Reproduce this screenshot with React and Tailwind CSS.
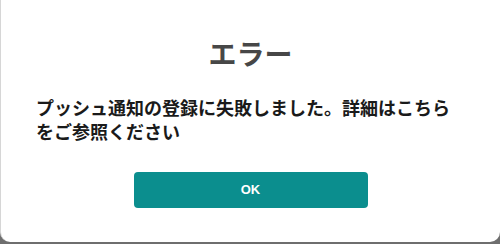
export default function App() {
  return (
    <div className="w-[500px] h-[244px] bg-[#6e6e6e] overflow-hidden">
      <div className="h-[242px] bg-white border-l border-[#d6d6d6] rounded-b-[10px] flex flex-col items-center font-['Noto_Sans_CJK_JP',sans-serif]">
        <h1 className="mt-[36px] text-[28px] leading-[34px] font-bold text-[#474747]">エラー</h1>
        <p className="mt-[25px] w-full pl-[35px] pr-[34px] text-[18px] leading-[24px] font-bold text-[#1a1a1a]">
          プッシュ通知の登録に失敗しました。詳細はこちらをご参照ください
        </p>
        <button className="mt-[29px] w-[234px] h-[36px] rounded-[4px] bg-[#0b8e8e] text-white text-[13px] font-bold font-['Liberation_Sans',sans-serif]">
          OK
        </button>
      </div>
    </div>
  );
}
